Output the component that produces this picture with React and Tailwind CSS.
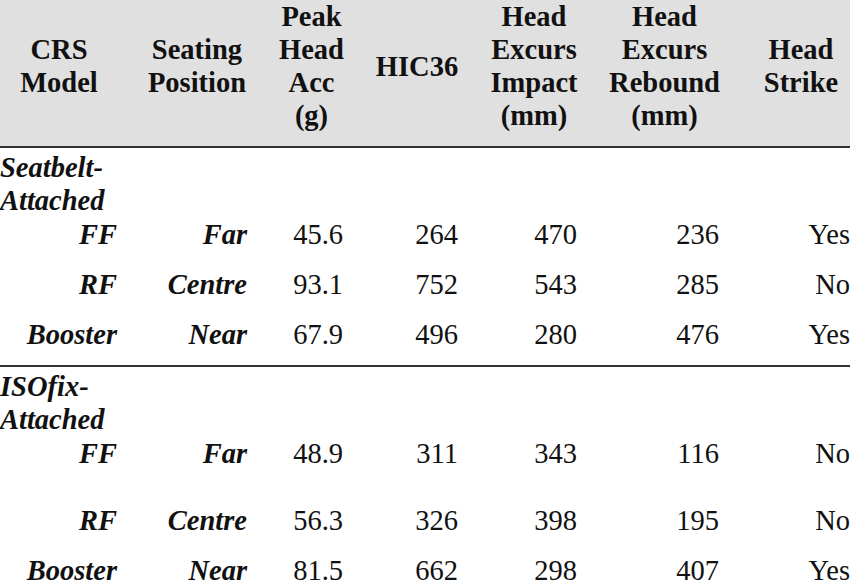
import React from "react";

const cols = ["w-[128px]", "w-[130px]", "w-[96px]", "w-[115px]", "w-[119px]", "w-[142px]", "w-[131px]"];
const headPad = ["pr-[10px]", "pl-[8px]", "pl-[11px]", "pl-[11px]", "pl-[11px]", "pl-[11px]", "pl-[11px]"];

const headers = [
  ["CRS", "Model"],
  ["Seating", "Position"],
  ["Peak", "Head", "Acc", "(g)"],
  ["HIC36"],
  ["Head", "Excurs", "Impact", "(mm)"],
  ["Head", "Excurs", "Rebound", "(mm)"],
  ["Head", "Strike"],
];

const groups = [
  {
    label: ["Seatbelt-", "Attached"],
    rows: [
      { h: "h-[50px]", d: ["FF", "Far", "45.6", "264", "470", "236", "Yes"] },
      { h: "h-[50px]", d: ["RF", "Centre", "93.1", "752", "543", "285", "No"] },
      { h: "h-[50px]", d: ["Booster", "Near", "67.9", "496", "280", "476", "Yes"] },
    ],
  },
  {
    label: ["ISOfix-", "Attached"],
    rows: [
      { h: "h-[67px]", d: ["FF", "Far", "48.9", "311", "343", "116", "No"] },
      { h: "h-[50px]", d: ["RF", "Centre", "56.3", "326", "398", "195", "No"] },
      { h: "h-[50px]", d: ["Booster", "Near", "81.5", "662", "298", "407", "Yes"] },
    ],
  },
];

export default function App() {
  return (
    <div
      className="w-[850px] h-[584px] overflow-hidden bg-white text-[#111] text-[28.5px] leading-[33px]"
      style={{ fontFamily: '"Liberation Serif", "Times New Roman", serif' }}
    >
      <div className="w-[861px]">
        {/* Header */}
        <div className="flex bg-[#e0e0e0] h-[148px] pt-[1px] pb-[15px] border-b-2 border-[#333]">
          {headers.map((lines, i) => (
            <div
              key={i}
              className={`${cols[i]} ${headPad[i]} shrink-0 flex flex-col items-center justify-center font-bold`}
            >
              {lines.map((l, j) => (
                <div key={j} className="whitespace-nowrap">{l}</div>
              ))}
            </div>
          ))}
        </div>

        {groups.map((g, gi) => (
          <div key={gi} className={gi === 0 ? "border-b-2 border-[#333]" : ""}>
            <div className="h-[67px] pt-[3px] font-bold italic">
              {g.label.map((l, j) => (
                <div key={j} className="whitespace-nowrap">{l}</div>
              ))}
            </div>
            {g.rows.map((r, ri) => (
              <div key={ri} className={`flex ${r.h} pt-[3px]`}>
                {r.d.map((c, ci) => (
                  <div
                    key={ci}
                    className={`${cols[ci]} shrink-0 text-right pr-[11px] whitespace-nowrap ${ci < 2 ? "font-bold italic" : ""}`}
                  >
                    {c}
                  </div>
                ))}
              </div>
            ))}
          </div>
        ))}
      </div>
    </div>
  );
}
